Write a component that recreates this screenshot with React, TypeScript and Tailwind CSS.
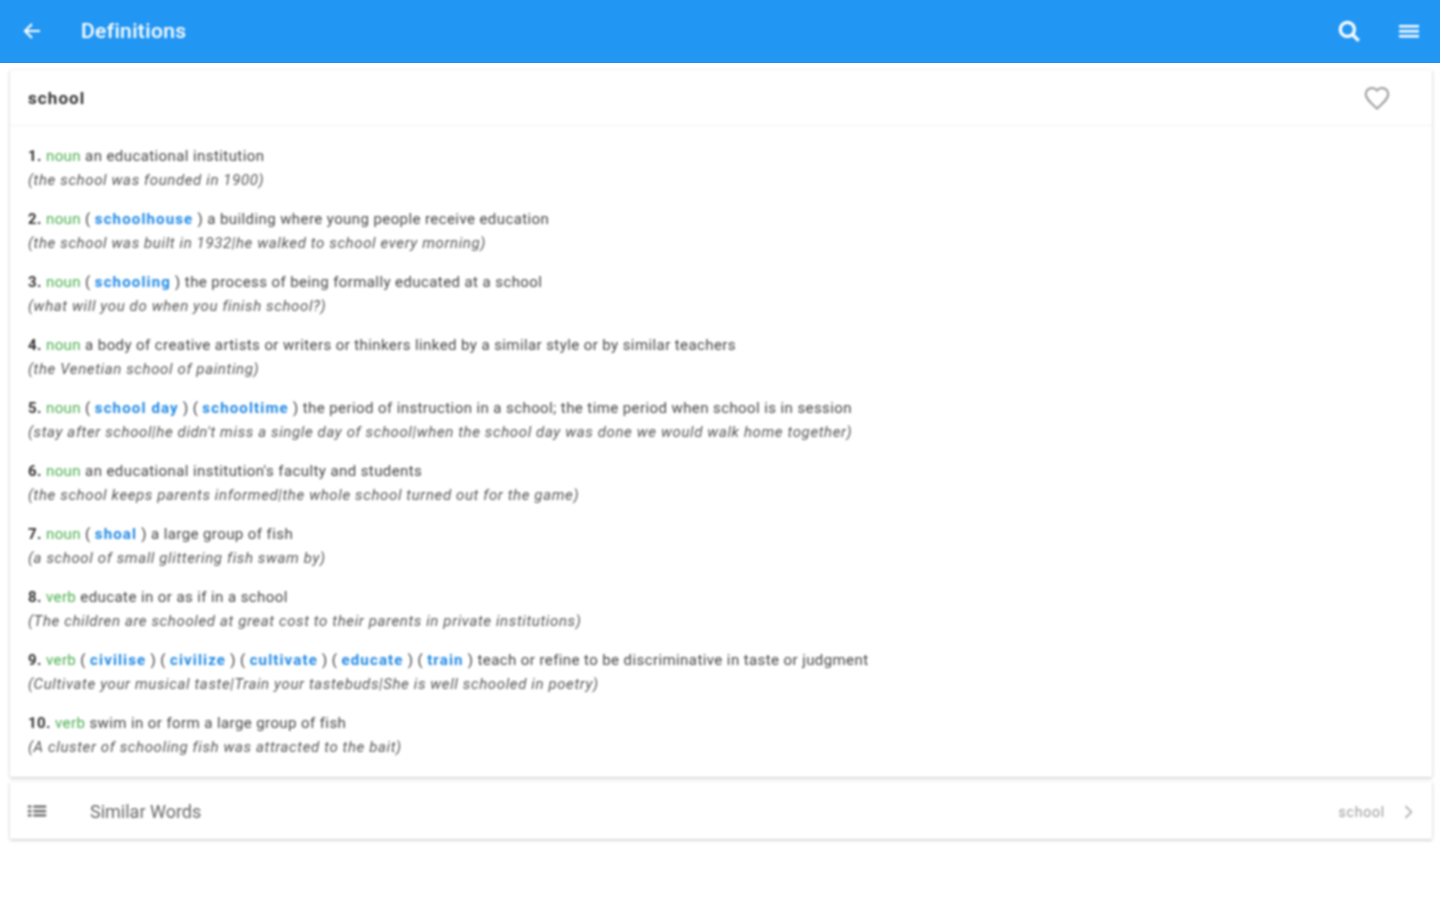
import React from "react";

type Def = { n: number; pos: string; syn?: string[]; text: string; ex: string };

const defs: Def[] = [
  { n: 1, pos: "noun", text: "an educational institution", ex: "(the school was founded in 1900)" },
  { n: 2, pos: "noun", syn: ["schoolhouse"], text: "a building where young people receive education", ex: "(the school was built in 1932|he walked to school every morning)" },
  { n: 3, pos: "noun", syn: ["schooling"], text: "the process of being formally educated at a school", ex: "(what will you do when you finish school?)" },
  { n: 4, pos: "noun", text: "a body of creative artists or writers or thinkers linked by a similar style or by similar teachers", ex: "(the Venetian school of painting)" },
  { n: 5, pos: "noun", syn: ["school day", "schooltime"], text: "the period of instruction in a school; the time period when school is in session", ex: "(stay after school|he didn't miss a single day of school|when the school day was done we would walk home together)" },
  { n: 6, pos: "noun", text: "an educational institution's faculty and students", ex: "(the school keeps parents informed|the whole school turned out for the game)" },
  { n: 7, pos: "noun", syn: ["shoal"], text: "a large group of fish", ex: "(a school of small glittering fish swam by)" },
  { n: 8, pos: "verb", text: "educate in or as if in a school", ex: "(The children are schooled at great cost to their parents in private institutions)" },
  { n: 9, pos: "verb", syn: ["civilise", "civilize", "cultivate", "educate", "train"], text: "teach or refine to be discriminative in taste or judgment", ex: "(Cultivate your musical taste|Train your tastebuds|She is well schooled in poetry)" },
  { n: 10, pos: "verb", text: "swim in or form a large group of fish", ex: "(A cluster of schooling fish was attracted to the bait)" },
];

function Row({ d }: { d: Def }) {
  return (
    <div className="text-[15px] leading-[23.5px] text-[#444] h-[47px] whitespace-nowrap">
      <div className="tracking-[0.41px]">
        <span className="font-bold text-[#333]">{d.n}.</span>{" "}
        <span className="text-[#4caf50]">{d.pos}</span>{" "}
        {d.syn?.map((s) => (
          <span key={s}>
            ( <span className="font-bold text-[#1e88e5] tracking-[1.15px]">{s}</span> ){" "}
          </span>
        ))}
        {d.text}
      </div>
      <div className="italic text-[#555] tracking-[0.62px]">{d.ex}</div>
    </div>
  );
}

export default function App() {
  return (
    <div className="min-h-[900px] bg-white font-['Roboto',sans-serif]">
      <header className="h-[63px] bg-[#2196f3] border-b border-[#1e90f5] text-white">
        <div className="h-full flex items-center blur-[0.8px]">
          <div className="w-[64px] flex justify-center">
            <svg width="24" height="24" viewBox="0 0 24 24" fill="none" stroke="#fff" strokeWidth="2.2">
              <path d="M20 12H5M12 5l-7 7 7 7" />
            </svg>
          </div>
          <div className="ml-[17px] text-[21px] font-medium leading-none tracking-[0.35px]">Definitions</div>
          <div className="ml-auto flex items-center">
            <svg width="26" height="26" viewBox="0 0 24 24" fill="none" stroke="#fff" strokeWidth="3" className="mr-[35px]">
              <circle cx="10.5" cy="10.5" r="6.5" />
              <path d="M15.5 15.5L21 21" />
            </svg>
            <svg width="24" height="24" viewBox="0 0 24 24" fill="#fff" className="mr-[19px]">
              <rect x="2" y="6" width="20" height="2.5" />
              <rect x="2" y="11" width="20" height="2.5" />
              <rect x="2" y="16" width="20" height="2.5" />
            </svg>
          </div>
        </div>
      </header>

      <div className="pl-[10px] pr-[8px] pt-[7px] blur-[0.8px]">
        <section className="bg-white shadow-[0_1px_3px_rgba(0,0,0,0.25)]">
          <div className="h-[56px] flex items-center pl-[18px] pr-[40px] border-b border-[#f4f4f4]">
            <div className="font-bold text-[17px] text-[#333] tracking-[1.1px] mt-[2px]">school</div>
            <svg width="30" height="30" viewBox="0 0 24 24" fill="none" stroke="#999" strokeWidth="1.6" className="ml-auto">
              <path d="M12 20.5l-1.3-1.2C5.9 15 3 12.3 3 9a5 5 0 0 1 5-5c1.6 0 3.1.8 4 2 .9-1.2 2.4-2 4-2a5 5 0 0 1 5 5c0 3.3-2.9 6-7.7 10.3z" />
            </svg>
          </div>
          <div className="pl-[18px] pt-[19px] pb-[18px] flex flex-col gap-[16px]">
            {defs.map((d) => (
              <Row key={d.n} d={d} />
            ))}
          </div>
        </section>

        <section className="mt-[5px] h-[57px] bg-white shadow-[0_1px_3px_rgba(0,0,0,0.25)] flex items-center pl-[16px] pr-[14px] pt-[1px]">
          <svg width="22" height="22" viewBox="0 0 24 24" fill="#666">
            <path d="M2 6h4v2.5H2zM8 6h14v2.5H8zM2 10.8h4v2.5H2zM8 10.8h14v2.5H8zM2 15.5h4V18H2zM8 15.5h14V18H8z" />
          </svg>
          <div className="ml-[42px] text-[18px] text-[#666]">Similar Words</div>
          <div className="ml-auto mt-[2px] text-[14px] text-[#999] tracking-[0.8px]">school</div>
          <svg width="20" height="20" viewBox="0 0 24 24" fill="none" stroke="#aaa" strokeWidth="2" className="ml-[13px] mt-[2px]">
            <path d="M9 5l7 7-7 7" />
          </svg>
        </section>
      </div>
    </div>
  );
}
